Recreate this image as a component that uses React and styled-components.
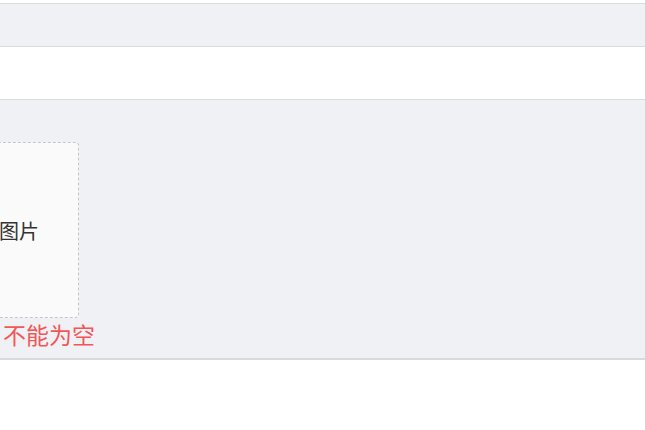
import React from 'react'
import styled, { createGlobalStyle } from 'styled-components'

// Global: _______________________________________
const GlobalStyle = createGlobalStyle`
   body {
      margin: 0;
      background: #ffffff;
      font-family: "Noto Sans CJK SC", "Noto Sans", sans-serif;
   }
`;

// Page wrapper
const Page = styled.div`
   padding-top: 3px;
   overflow: hidden;
`;

// Grey band row
const Band = styled.div`
   height: ${p => p.h}px;
   background-color: #f0f1f5;
   border-top: 1px solid #dadbdf;
   border-bottom: 1px solid #dadbdf;
`;

// White row between bands
const Blank = styled.div`
   height: ${p => p.h}px;
   background-color: #ffffff;
`;

// Upload panel
const Panel = styled.div`
   height: 216px;
   padding-top: 42px;
   background-color: #f0f1f5;
   border-top: 1px solid #dadbdf;
   border-bottom: 2px solid #d8d9dd;
`;

// Field runs in from the left edge of the screen
const Field = styled.div`
   display: flex;
   flex-direction: column;
   margin-left: -81px;
`;

const UploadBox = styled.div`
   width: 119px;
   height: 174px;
   padding-right: 39px;
   display: flex;
   align-items: center;
   justify-content: flex-end;
   background-color: #fafafa;
   border: 1px dashed #c6c6ca;
   border-radius: 4px;
   color: #333333;
   font-size: 20px;
`;

const ErrorText = styled.div`
   margin-top: 1px;
   padding-left: 84px;
   font-size: 23px;
   line-height: 30px;
   color: #f25656;
   white-space: nowrap;
`;

const App = () => {
    return (
        <Page>
            <GlobalStyle />
            <Band h={42} />
            <Blank h={52} />
            <Panel>
                <Field>
                    <UploadBox>图片</UploadBox>
                    <ErrorText>不能为空</ErrorText>
                </Field>
            </Panel>
        </Page>
    )
}

export default App
